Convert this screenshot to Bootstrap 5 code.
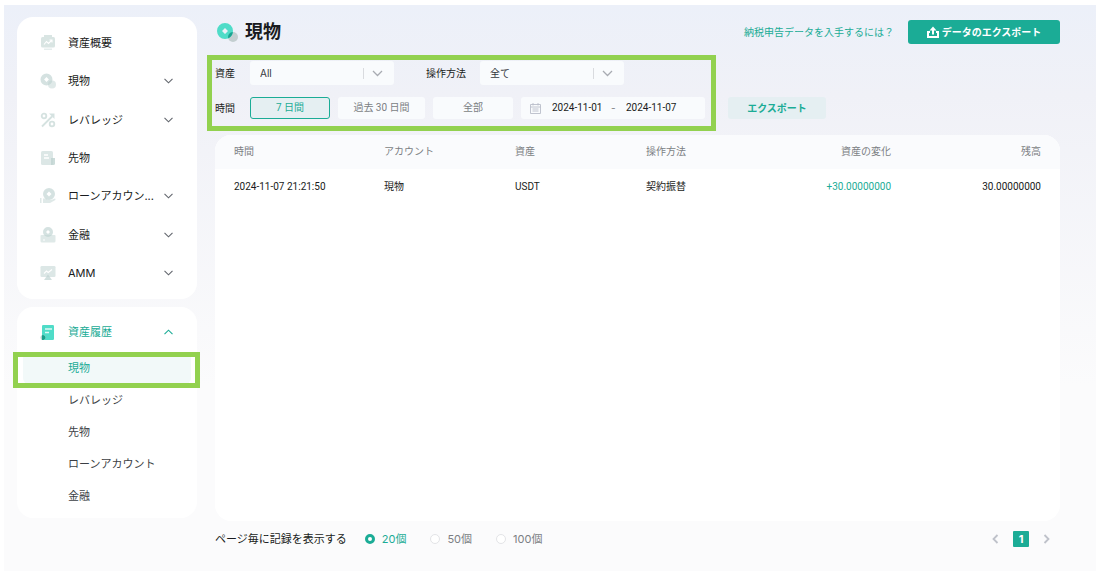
<!DOCTYPE html>
<html lang="ja">
<head>
<meta charset="utf-8">
<meta name="viewport" content="width=device-width, initial-scale=1">
<title>現物 - 資産履歴</title>
<link href="https://cdn.jsdelivr.net/npm/bootstrap@5.3.0/dist/css/bootstrap.min.css" rel="stylesheet">
<style>
  :root { --teal: #1bac96; --marker: #92d14f; --ink: #191b20; --soft: #7c7f84; --field: #f9fbfd; --numeric: Roboto, "Noto Sans CJK JP", sans-serif; }
  body { font-family: Inter, "Noto Sans CJK JP", sans-serif; font-size: 10px; line-height: 16px; color: var(--ink); background: #fff; padding: 5px 6px 4px 4px; }
  a { text-decoration: none; }
  .shell { min-height: calc(100vh - 9px); padding: 12px 36px 0 13px; gap: 18px; background: linear-gradient(#ecf0f9 0, #f0f1f7 90px, #fbfbfc 380px); }
  .side { width: 180px; gap: 8px; }
  .panel { background: #fff; border-radius: 16px; }
  .menu { min-height: 282px; padding: 7px 0; font-size: 11px; }
  .menu-link { display: flex; align-items: center; gap: 12px; height: 38px; padding: 0 24px 0 23px; color: var(--ink); }
  .menu-link span { flex: 1; min-width: 0; }
  .menu-link .pic { width: 16px; height: 16px; flex-shrink: 0; color: #bfd3d1; }
  .menu-link .arrow { width: 9px; height: 6px; flex-shrink: 0; color: #62666d; }
  .history { padding: 7px 0 6px; font-size: 11px; }
  .menu-link.open { height: 36px; margin-bottom: 2px; color: var(--teal); }
  .menu-link.open .arrow { color: var(--teal); }
  .sub-link { display: block; height: 32px; line-height: 32px; margin: 0 6px; padding-left: 45px; color: #3c3f45; }
  .sub-link.current { color: var(--teal); background: #f2f9f9; border-radius: 6px; position: relative; }
  .marked { position: relative; }
  .marked::after { content: ""; position: absolute; border: 5px solid var(--marker); pointer-events: none; }
  .sub-link.marked::after { inset: 0 -9px -4px -10px; }
  .filters.marked::after { inset: -6px -11px -12px -8px; }
  .head { height: 24px; margin: 3px 0 17px; padding-left: 2px; }
  .head h1 { font-size: 18px; line-height: 24px; font-weight: 700; margin: 0 0 0 6px; }
  .head-icon { width: 22px; height: 22px; }
  .head a { color: var(--teal); margin-right: 14px; }
  .btn-data { width: 152px; height: 24px; background: var(--teal); color: #fff; border: 0; border-radius: 3px; font-weight: 700; gap: 3px; }
  .btn-data svg { width: 12px; height: 12px; }
  .tag { width: 35px; }
  .tag-wide { margin-left: 32px; width: 54px; }
  .pick { width: 144px; height: 24px; padding: 0 40px 0 10px; font-size: 10px; line-height: 24px; color: #35383e; border: 0; border-radius: 3px; background: var(--field) url("data:image/svg+xml,%3Csvg xmlns='http://www.w3.org/2000/svg' width='36' height='24' fill='none'%3E%3Cpath d='M5.500 7v11' stroke='%23d9dbdf'/%3E%3Cpath d='m15 10 4.500 4.500L24 10' stroke='%23a8abb2' stroke-width='1.300'/%3E%3C/svg%3E") no-repeat right center / 36px 24px; }
  .row-time { margin-top: 12px; }
  .span-btn { width: 80px; height: 22px; padding: 0; margin-right: 8px; font-family: var(--numeric); font-size: 10px; line-height: 20px; color: var(--soft); background: var(--field); border: 0; border-radius: 3px; }
  .span-btn.wide { width: 87px; }
  .span-btn.on { color: var(--teal); background: #e5eff2; border: 1px solid var(--teal); }
  .dates { width: 184px; height: 22px; padding-left: 9px; background: var(--field); border-radius: 3px; color: var(--soft); }
  .dates svg { width: 11px; height: 11px; margin-right: 11px; color: #b9bdc9; }
  .dates input { width: 59px; padding: 0; border: 0; background: none; color: var(--ink); font-family: var(--numeric); font-size: 10px; line-height: 16px; }
  .dates span { width: 15px; }
  .btn-export { width: 98px; height: 22px; margin-left: 23px; border: 0; border-radius: 3px; background: #e5eff2; color: var(--teal); font-weight: 700; }
  .ledger { margin-top: 16px; overflow: hidden; }
  .ledger table { width: 100%; table-layout: fixed; font-family: var(--numeric); }
  .ledger th { height: 34px; font-weight: 400; color: var(--soft); background: #fafbfd; padding: 0; }
  .ledger td { height: 36px; padding: 0; }
  .ledger .gain { color: var(--teal); }
  .ledger th:first-child, .ledger td:first-child { padding-left: 19px; }
  .ledger th:last-child, .ledger td:last-child { padding-right: 19px; }
  .w-edge { width: 20%; } .w-mid { width: 15.500%; }
  .foot { height: 50px; padding-bottom: 14px; font-size: 11px; }
  .foot .foot-label { margin-right: 18px; }
  .choice { gap: 7px; margin-right: 24px; color: var(--soft); }
  .choice input { appearance: none; width: 10px; height: 10px; margin: 0; border: 1px solid #e3e4e7; border-radius: 50%; background: #fff; }
  .choice input:checked { border: 3px solid var(--teal); }
  .choice:has(input:checked) { color: var(--teal); }
  .pager { margin: 0 10px 0 auto; gap: 14px; }
  .pager a { width: 7px; height: 16px; color: #bfc2ca; display: flex; align-items: center; }
  .pager a.here { width: 16px; color: #fff; background: var(--teal); border-radius: 1px; justify-content: center; font-weight: 700; }
  .pager svg { width: 7px; height: 10px; }
</style>
</head>
<body>
<svg class="d-none" xmlns="http://www.w3.org/2000/svg">
  <symbol id="down" viewBox="0 0 9 6"><path d="M.5.8l4 4 4-4" fill="none" stroke="currentColor" stroke-width="1.100"/></symbol>
  <symbol id="up" viewBox="0 0 9 6"><path d="M.5 5.200l4-4 4 4" fill="none" stroke="currentColor" stroke-width="1.100"/></symbol>
  <symbol id="overview" viewBox="0 0 16 16"><path d="M4 0h8v2H4z" fill="currentColor" opacity=".6"/><rect x="1" y="2" width="14" height="10.500" rx="1.500" fill="currentColor" opacity=".6"/><path d="M4 9.500l2.500-3 2 2L12 5M9.500 5H12v2.500" fill="none" stroke="#fff" stroke-width="1.100"/><path d="M4 13.500h8V15H4z" fill="currentColor" opacity=".4"/></symbol>
  <symbol id="coins" viewBox="0 0 16 16"><path fill-rule="evenodd" d="M6.500.5a6 6 0 1 0 0 12 6 6 0 0 0 0-12zm0 3.600L8.900 6.500 6.500 8.900 4.100 6.500z" fill="currentColor" opacity=".65"/><circle cx="12" cy="11.500" r="4" fill="currentColor" opacity=".5"/></symbol>
  <symbol id="percent" viewBox="0 0 16 16"><g fill="none" stroke="currentColor" stroke-width="1.800" opacity=".65"><circle cx="4" cy="4" r="2.300"/><circle cx="12" cy="12" r="2.300"/><path d="M2 14.500L12 4.500"/></g><path d="M9 1.500h5.500V7z" fill="currentColor" opacity=".65"/></symbol>
  <symbol id="sheet" viewBox="0 0 16 16"><rect x="1" y="1" width="12" height="14" rx="1.500" fill="currentColor" opacity=".55"/><path d="M11 8h4v5.500A1.500 1.500 0 0 1 13.500 15H11z" fill="currentColor" opacity=".8"/><path d="M4 5h4M4 8h5" stroke="#fff" stroke-width="1.300"/></symbol>
  <symbol id="loan" viewBox="0 0 16 16"><path fill-rule="evenodd" d="M9 0a6 6 0 1 0 0 12A6 6 0 0 0 9 0zm0 3.500L11.500 6 9 8.500 6.500 6z" fill="currentColor" opacity=".65"/><path d="M0 10h1.500v5H0zM3 10.500h3l2 1.500h3l4-1.500c1 .5.5 1.500-.5 2L10 15H3z" fill="currentColor" opacity=".5"/></symbol>
  <symbol id="finance" viewBox="0 0 16 16"><path fill-rule="evenodd" d="M8 0a5 5 0 1 0 0 10A5 5 0 0 0 8 0zm0 3l2 2-2 2-2-2z" fill="currentColor" opacity=".65"/><path d="M1.500 8h13a1 1 0 0 1 1 1v5a1.500 1.500 0 0 1-1.500 1.500H2A1.500 1.500 0 0 1 .5 14V9a1 1 0 0 1 1-1z" fill="currentColor" opacity=".5"/><path d="M3 13h2" stroke="#fff"/></symbol>
  <symbol id="board" viewBox="0 0 16 16"><rect x=".5" y="1" width="15" height="11" rx="1.200" fill="currentColor" opacity=".55"/><path d="M4 8.500L6.500 6l1.700 1.500L12 4.500" fill="none" stroke="#fff" stroke-width="1.100"/><path d="M8 9.500l4 5.500H4z" fill="currentColor" opacity=".7"/></symbol>
</svg>

<div class="shell d-flex">
  <nav class="side flex-shrink-0 d-flex flex-column" aria-label="資産">
    <div class="panel menu d-flex flex-column justify-content-between">
      <a class="menu-link" href="#"><svg class="pic"><use href="#overview"/></svg><span>資産概要</span></a>
      <a class="menu-link" href="#"><svg class="pic"><use href="#coins"/></svg><span>現物</span><svg class="arrow"><use href="#down"/></svg></a>
      <a class="menu-link" href="#"><svg class="pic"><use href="#percent"/></svg><span>レバレッジ</span><svg class="arrow"><use href="#down"/></svg></a>
      <a class="menu-link" href="#"><svg class="pic"><use href="#sheet"/></svg><span>先物</span></a>
      <a class="menu-link" href="#"><svg class="pic"><use href="#loan"/></svg><span class="text-nowrap">ローンアカウン...</span><svg class="arrow"><use href="#down"/></svg></a>
      <a class="menu-link" href="#"><svg class="pic"><use href="#finance"/></svg><span>金融</span><svg class="arrow"><use href="#down"/></svg></a>
      <a class="menu-link" href="#"><svg class="pic"><use href="#board"/></svg><span>AMM</span><svg class="arrow"><use href="#down"/></svg></a>
    </div>
    <div class="panel history">
      <a class="menu-link open" href="#">
        <svg class="pic" viewBox="0 0 16 16"><rect x="2" y="1" width="12" height="15" rx="1.200" fill="#4fdcc8"/><path d="M5 5h7M5 8.500h4" stroke="#dff8f4" stroke-width="1.500"/><circle cx="3" cy="13.500" r="2.500" fill="#b7cfcc"/><path d="M2 11.200a2.500 2.500 0 1 1 0 4.600z" fill="#16a08c"/></svg>
        <span>資産履歴</span><svg class="arrow"><use href="#up"/></svg></a>
      <a class="sub-link current marked" href="#" aria-current="page">現物</a>
      <a class="sub-link" href="#">レバレッジ</a>
      <a class="sub-link" href="#">先物</a>
      <a class="sub-link" href="#">ローンアカウント</a>
      <a class="sub-link" href="#">金融</a>
    </div>
  </nav>

  <main class="flex-grow-1 d-flex flex-column">
    <header class="head d-flex align-items-center">
      <svg class="head-icon" viewBox="0 0 22 22"><circle cx="16" cy="16" r="5" fill="#c3ced0"/><path fill-rule="evenodd" d="M8 2a8 8 0 1 0 0 16A8 8 0 0 0 8 2zm0 5l3 3-3 3-3-3z" fill="#4fdcc8"/><path d="M11.200 17.300A8 8 0 0 0 15.900 11a5 5 0 0 0-4.700 6.300z" fill="#1ba391"/></svg>
      <h1>現物</h1>
      <a class="ms-auto" href="#">納税申告データを入手するには？</a>
      <button class="btn-data d-flex align-items-center justify-content-center" type="button">
        <svg viewBox="0 0 12 12" fill="none" stroke="#fff" stroke-width="2"><path d="M3 6H1v5h10V6H9M6 8.500V3"/><path d="M2.500 4.500L6 .5l3.500 4z" fill="#fff" stroke="none"/></svg>データのエクスポート</button>
    </header>

    <div class="d-flex align-items-end">
      <div class="filters marked">
        <div class="d-flex align-items-center">
          <label class="tag" for="asset">資産</label>
          <select class="form-select pick" id="asset"><option>All</option></select>
          <label class="tag-wide" for="method">操作方法</label>
          <select class="form-select pick" id="method"><option>全て</option></select>
        </div>
        <div class="row-time d-flex align-items-center">
          <span class="tag">時間</span>
          <button class="span-btn on" type="button">7 日間</button>
          <button class="span-btn wide" type="button">過去 30 日間</button>
          <button class="span-btn" type="button">全部</button>
          <div class="dates d-flex align-items-center">
            <svg viewBox="0 0 11 11" fill="none" stroke="currentColor"><path d="M.5 1.500h10v9H.5zM.5 4h10M3 0v2.500M8 0v2.500M2.500 6h6M2.500 8h6" stroke-width=".9"/></svg>
            <input type="text" value="2024-11-01" aria-label="開始日">
            <span>-</span>
            <input type="text" value="2024-11-07" aria-label="終了日">
          </div>
        </div>
      </div>
      <button class="btn-export" type="button">エクスポート</button>
    </div>

    <section class="panel ledger flex-grow-1">
      <table>
        <colgroup><col class="w-edge"><col class="w-mid"><col class="w-mid"><col><col><col class="w-edge"></colgroup>
        <thead><tr><th>時間</th><th>アカウント</th><th>資産</th><th>操作方法</th><th class="text-end">資産の変化</th><th class="text-end">残高</th></tr></thead>
        <tbody><tr><td>2024-11-07 21:21:50</td><td>現物</td><td>USDT</td><td>契約振替</td><td class="gain text-end">+30.00000000</td><td class="text-end">30.00000000</td></tr></tbody>
      </table>
    </section>

    <footer class="foot d-flex align-items-center">
      <span class="foot-label">ページ毎に記録を表示する</span>
      <label class="choice d-flex align-items-center"><input type="radio" name="size" checked>20個</label>
      <label class="choice d-flex align-items-center"><input type="radio" name="size">50個</label>
      <label class="choice d-flex align-items-center"><input type="radio" name="size">100個</label>
      <div class="pager d-flex align-items-center">
        <a href="#" aria-label="前へ"><svg viewBox="0 0 7 10" fill="none" stroke="currentColor" stroke-width="1.800"><path d="M5.500 1l-4 4 4 4"/></svg></a>
        <a class="here" href="#">1</a>
        <a href="#" aria-label="次へ"><svg viewBox="0 0 7 10" fill="none" stroke="currentColor" stroke-width="1.800"><path d="M1.500 1l4 4-4 4"/></svg></a>
      </div>
    </footer>
  </main>
</div>
<script src="https://cdn.jsdelivr.net/npm/bootstrap@5.3.0/dist/js/bootstrap.bundle.min.js"></script>
</body>
</html>
